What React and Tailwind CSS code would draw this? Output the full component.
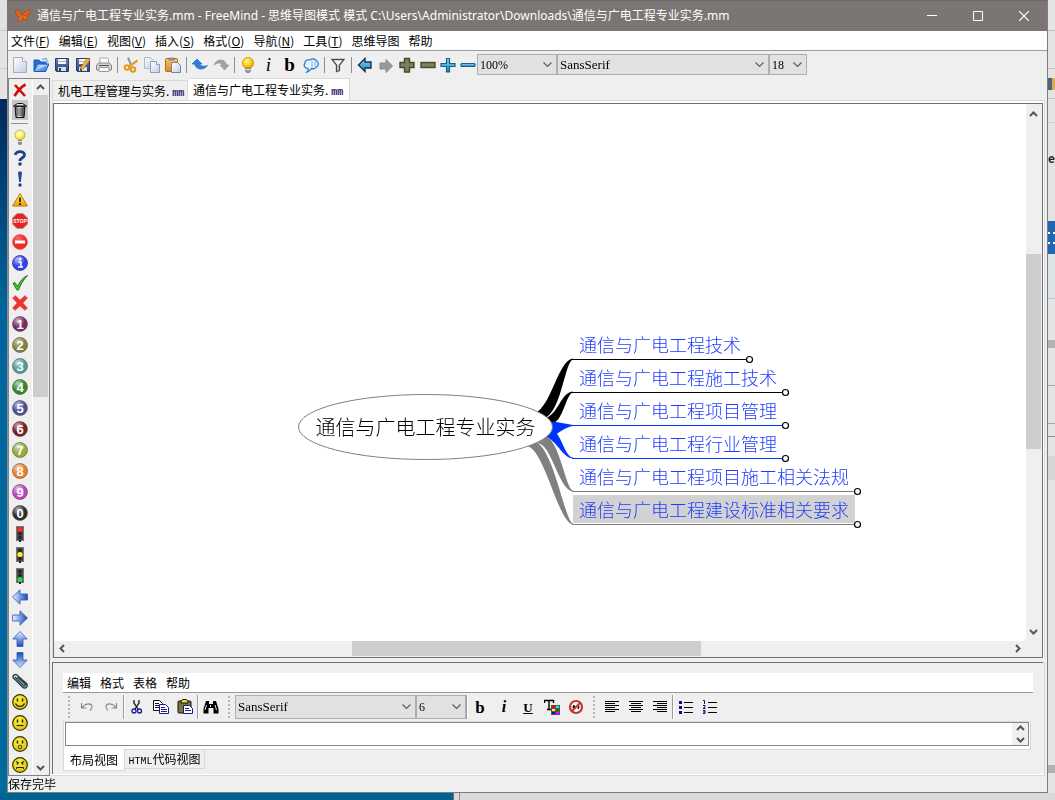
import React from "react";

const CJK = "font-['Noto_Sans_CJK_SC','Noto_Sans',sans-serif]";
const SERIF = "font-['Liberation_Serif','Noto_Sans_CJK_SC',serif]";

function Svg({ w = 16, h = 16, children, className = "" }) {
  return (
    <svg width={w} height={h} viewBox={`0 0 ${w} ${h}`} className={`shrink-0 ${className}`} aria-hidden="true">
      {children}
    </svg>
  );
}

/* ---------- shared gradients ---------- */
function Defs() {
  return (
    <svg width="0" height="0" className="absolute" aria-hidden="true">
      <defs>
        <linearGradient id="paper" x1="0" y1="0" x2="1" y2="1"><stop offset="0" stopColor="#fff" /><stop offset="1" stopColor="#c3cde0" /></linearGradient>
        <linearGradient id="folder" x1="0" y1="0" x2="1" y2="1"><stop offset="0" stopColor="#cfe6ff" /><stop offset="1" stopColor="#1f6fd8" /></linearGradient>
        <linearGradient id="disk" x1="0" y1="0" x2="0" y2="1"><stop offset="0" stopColor="#6d84b8" /><stop offset="1" stopColor="#2c3f70" /></linearGradient>
        <linearGradient id="clip" x1="0" y1="0" x2="0" y2="1"><stop offset="0" stopColor="#ffc45a" /><stop offset="1" stopColor="#e08a1c" /></linearGradient>
        <radialGradient id="bulb" cx="0.4" cy="0.35" r="0.7"><stop offset="0" stopColor="#fff7a0" /><stop offset="0.5" stopColor="#ffd21a" /><stop offset="1" stopColor="#ee8a00" /></radialGradient>
        <radialGradient id="idea" cx="0.4" cy="0.35" r="0.7"><stop offset="0" stopColor="#fffff0" /><stop offset="0.6" stopColor="#ffee58" /><stop offset="1" stopColor="#d9bf20" /></radialGradient>
        <linearGradient id="arrowA" x1="0" y1="0" x2="1" y2="0"><stop offset="0" stopColor="#eaf4ff" /><stop offset="1" stopColor="#1648b8" /></linearGradient>
        <linearGradient id="arrowB" x1="0" y1="0" x2="0" y2="1"><stop offset="0" stopColor="#eaf4ff" /><stop offset="1" stopColor="#1648b8" /></linearGradient>
        <linearGradient id="arrowC" x1="0" y1="0" x2="0" y2="1"><stop offset="0" stopColor="#1648b8" /><stop offset="1" stopColor="#d5e8ff" /></linearGradient>
        <linearGradient id="cyan" x1="0" y1="0" x2="0" y2="1"><stop offset="0" stopColor="#8fd4f2" /><stop offset="1" stopColor="#1b86b8" /></linearGradient>
        <linearGradient id="can" x1="0" y1="0" x2="1" y2="0"><stop offset="0" stopColor="#333" /><stop offset="0.4" stopColor="#f2f2f2" /><stop offset="1" stopColor="#222" /></linearGradient>
        <radialGradient id="shine" cx="0.35" cy="0.25" r="0.8"><stop offset="0" stopColor="#fff" stopOpacity="0.65" /><stop offset="0.6" stopColor="#fff" stopOpacity="0" /></radialGradient>
        <radialGradient id="smile" cx="0.4" cy="0.3" r="0.8"><stop offset="0" stopColor="#fff240" /><stop offset="1" stopColor="#d8bc00" /></radialGradient>
        <linearGradient id="warn" x1="0" y1="0" x2="0" y2="1"><stop offset="0" stopColor="#fff04a" /><stop offset="1" stopColor="#f5a000" /></linearGradient>
      </defs>
    </svg>
  );
}

/* ---------- main toolbar icons ---------- */
const NewIcon = () => <Svg><path d="M1.5.5h9l4 4v11h-13z" fill="url(#paper)" stroke="#a3adbf" /><path d="M10.500.5v4h4" fill="#fff" stroke="#a3adbf" /></Svg>;
const OpenIcon = () => (
  <Svg><path d="M1 14V3h5l2 2h5v9z" fill="#2f6fcc" stroke="#1b5ab4" /><path d="M9 2.500l4-1 2 4" fill="none" stroke="#7fb0ea" strokeWidth="1.500" /><path d="M1 14.500L4.500 7H16l-3.500 7.500z" fill="url(#folder)" stroke="#155ac0" /><path d="M3 13l5-5h6z" fill="#fff" opacity=".5" /></Svg>
);
const DiskBody = () => (
  <><path d="M1.500 1.500h13v13h-12l-1-1z" fill="url(#disk)" stroke="#2b3c66" /><path d="M4 2h8v5H4z" fill="#f4f6fa" /><path d="M4 4.500h8" stroke="#a8b4cc" /><path d="M4 10h8v4H4z" fill="#d8dfea" /><path d="M5 11h2v3H5z" fill="#2b3c66" /></>
);
const SaveIcon = () => <Svg><DiskBody /></Svg>;
const SaveAsIcon = () => <Svg><DiskBody /><path d="M5.500 13l1-3.500L12.500 1l2.500 2-6.500 8.500z" fill="#ffb52e" stroke="#b06a00" strokeWidth=".7" /></Svg>;
const PrintIcon = () => (
  <Svg><path d="M4 7V1h7l1.500 1v5z" fill="#fff" stroke="#aaa" /><path d="M.5 8l2.500-2h10l2.500 2v5H.5z" fill="#d2d2d0" stroke="#888" /><path d="M3 10.500h10v4H3z" fill="#f6f6f6" stroke="#999" /><path d="M3 8.500h10" stroke="#555" /></Svg>
);
const CutIcon = () => (
  <Svg><path d="M5 .5l3.500 8.500" stroke="#8f969e" strokeWidth="2" /><path d="M14.500 3.500L6 9.500" stroke="#e0a02a" strokeWidth="2.200" /><circle cx="4" cy="10.500" r="2.300" fill="none" stroke="#e29a1c" strokeWidth="2" /><circle cx="10" cy="12.500" r="2.300" fill="none" stroke="#e29a1c" strokeWidth="2" /></Svg>
);
const CopyIcon = () => (
  <Svg><path d="M.5.5h6l3 3v8h-9z" fill="url(#paper)" stroke="#b0b8d0" /><path d="M6.500 4.500h6l3 3v8h-9z" fill="url(#paper)" stroke="#8f9cc0" /><path d="M12.500 4.500v3h3" fill="#fff" stroke="#8f9cc0" /></Svg>
);
const PasteIcon = () => (
  <Svg><rect x=".5" y="1.500" width="12" height="13" rx="1" fill="url(#clip)" stroke="#b36a12" /><path d="M4 3V1h5v2z" fill="#8aa0c8" stroke="#5a6a90" strokeWidth=".6" /><path d="M6.500 5.500h6l3 3v7h-9z" fill="url(#paper)" stroke="#6d83b8" /></Svg>
);
const UndoIcon = () => <Svg><path d="M0 7l5-5 5 5H7.500c1 2 4 3 8 1.500-3 4.500-11 5.500-13-1.500z" fill="#2e7de0" stroke="#1c5bb4" strokeWidth=".6" /></Svg>;
const RedoIcon = () => <Svg><path d="M16 8l-4.500 5L7 8h2.500C8.500 5.500 5 5 1 8 3 2 12 .5 13.500 8z" fill="#a2a2a2" stroke="#8a8a8a" strokeWidth=".6" /></Svg>;
const BulbIcon = () => (
  <Svg><circle cx="8" cy="6" r="5.600" fill="url(#bulb)" stroke="#e08c00" strokeWidth=".8" /><path d="M5.500 11h5v3l-1.500 2H7l-1.500-2z" fill="#9a9a9a" stroke="#666" strokeWidth=".5" /><path d="M5.500 12.500h5" stroke="#e8e8e8" /></Svg>
);
const CloudIcon = () => (
  <Svg><path d="M5 11.500C1 11.500.5 8 2 6.500 1.500 3.500 5 2 7 3c2-2 6-1 6.500 1 2.500 1 2 5 0 6-1 1.500-3 2-5 1.500-1 2-2.500 3-4.500 3.500 1-1 1.500-2 1-3.500z" fill="#e3f3ff" stroke="#2f80cc" strokeWidth="1.300" /><path d="M9 4v6.500M12 4.500v5" stroke="#a9d3f5" strokeWidth="2" /></Svg>
);
const FilterIcon = () => <Svg><path d="M2 2.500h12L9.500 8v5.500l-3 1V8z" fill="#f4f4f4" stroke="#4c4c4c" strokeWidth="1.300" /><path d="M8 8v5" stroke="#9a9a9a" /></Svg>;
const BackIcon = () => <Svg><path d="M1.500 8L8 1.500v3.500h6v6H8v3.500z" fill="url(#cyan)" stroke="#12335c" strokeWidth="1.400" /></Svg>;
const ForwardIcon = () => <Svg><path d="M14.500 9L8 2.500V6H2v6h6v3.500z" fill="#999" stroke="#8a8a8a" /></Svg>;
const PlusIcon = ({ fill, stroke }) => <Svg><path d="M5.500 1.500h5v4h4.500v5h-4.500v4.500h-5v-4.500H1v-5h4.500z" fill={fill} stroke={stroke} strokeWidth="1.400" /></Svg>;
const ThinPlus = () => <Svg><path d="M6.500 1.500h3v5H15v3H9.500V15h-3V9.500H1v-3h5.500z" fill="url(#cyan)" stroke="#1a5f8c" strokeWidth="1.200" /></Svg>;
const MinusIcon = () => <Svg><rect x="1" y="5.500" width="14" height="5" fill="#7d7d68" stroke="#4a4a20" strokeWidth="1.400" /></Svg>;
const ThinMinus = () => <Svg><rect x="1" y="6.500" width="14" height="3" rx="1" fill="url(#cyan)" stroke="#1a5f8c" strokeWidth="1.200" /></Svg>;
const Letter = ({ children, className = "" }) => <span className={`${SERIF} leading-none text-black ${className}`}>{children}</span>;

/* ---------- icon palette ---------- */
const Ball = ({ color, label }) => (
  <Svg>
    <circle cx="8" cy="8" r="7.500" fill={color} stroke="#555" strokeOpacity=".6" />
    <circle cx="8" cy="8" r="7" fill="url(#shine)" />
    <text x="8" y="12.500" textAnchor="middle" fontFamily="Liberation Sans, sans-serif" fontWeight="bold" fontSize="13" fill="#fff">{label}</text>
  </Svg>
);
const Light = ({ on }) => (
  <Svg>
    <rect x="4.500" y=".5" width="7" height="14" fill="#4a4a4a" stroke="#777" />
    <path d="M8 14v2" stroke="#222" strokeWidth="2" />
    <circle cx="8" cy="3.500" r={on === 0 ? 2.6 : 1.8} fill={on === 0 ? "#ff2a1a" : "#222"} />
    <circle cx="8" cy="7.500" r={on === 1 ? 2.6 : 1.8} fill={on === 1 ? "#ffee22" : "#222"} />
    <circle cx="8" cy="11.500" r={on === 2 ? 2.6 : 1.8} fill={on === 2 ? "#22e044" : "#222"} />
  </Svg>
);
const Face = ({ children }) => (
  <Svg><circle cx="8" cy="8" r="7.300" fill="url(#smile)" stroke="#3a3400" strokeWidth="1.200" />{children}</Svg>
);
const Eyes = () => <path d="M5.500 4.500v3M10.500 4.500v3" stroke="#222" strokeWidth="1.500" />;

const ICONS = [
  ["创意", <Svg><circle cx="8" cy="6" r="5" fill="url(#idea)" stroke="#b8a83a" strokeWidth=".8" /><path d="M6 11h4v3.500l-1 1.500H7l-1-1.500z" fill="#8d8d8d" /><path d="M6 12.500h4" stroke="#ddd" /></Svg>],
  ["问题", <Svg><path d="M3.500 5C3.500.5 12.500.5 12.500 5c0 3-4.500 2.500-4.500 6" fill="none" stroke="#1e3f86" strokeWidth="2.800" /><circle cx="8" cy="14" r="1.800" fill="#1e3f86" /></Svg>],
  ["重要", <Svg><path d="M6 1.500C6 0 10 0 10 1.500L8.800 11H7.200z" fill="#1e4a96" /><circle cx="8" cy="14" r="1.700" fill="#1e3f86" /></Svg>],
  ["警告", <Svg><path d="M8 1.500L15.500 14H.5z" fill="url(#warn)" stroke="#b87a10" strokeLinejoin="round" /><path d="M8 5.500v4.500M8 11v2" stroke="#111" strokeWidth="1.600" /></Svg>],
  ["停止", <Svg><path d="M5 .5h6L15.500 5v6L11 15.500H5L.5 11V5z" fill="#e32424" stroke="#c98a8a" /><text x="8" y="10" textAnchor="middle" fontFamily="Liberation Sans, sans-serif" fontWeight="bold" fontSize="5" fill="#fff">STOP</text></Svg>],
  ["禁止", <Svg><circle cx="8" cy="8" r="7.500" fill="#ee2b24" stroke="#d66" strokeWidth=".7" /><circle cx="8" cy="8" r="7" fill="url(#shine)" opacity=".5" /><rect x="3" y="6.500" width="10" height="3" fill="#fff" /></Svg>],
  ["信息", <Svg><circle cx="8" cy="8" r="7.500" fill="#3542e8" stroke="#2028a0" strokeWidth=".7" /><circle cx="8" cy="8" r="7" fill="url(#shine)" /><path d="M6.500 7H9v4.500M6 12h5" stroke="#fff" strokeWidth="1.500" fill="none" /><circle cx="8.300" cy="4" r="1.300" fill="#fff" /></Svg>],
  ["完成", <Svg><path d="M1 8.500l2-1 2.500 4C8 6 11 2.500 15.500.5 11 5 8.500 10 6.500 15H5z" fill="#3fc63a" stroke="#146c14" strokeWidth=".9" /></Svg>, "h-5"],
  ["取消", <Svg><path d="M.5 3L3.500.5 8 5l5-4.500 2.500 2.500L11 8l4.500 5-2.500 2.500L8 11l-5 4.500L.5 13 5 8z" fill="#f03030" stroke="#e07070" strokeWidth=".7" /></Svg>, "h-5"],
  ["优先级 1", <Ball color="#7a2a68" label="1" />],
  ["优先级 2", <Ball color="#85803a" label="2" />],
  ["优先级 3", <Ball color="#4f9c9c" label="3" />],
  ["优先级 4", <Ball color="#2f8a2a" label="4" />],
  ["优先级 5", <Ball color="#4a4f9c" label="5" />],
  ["优先级 6", <Ball color="#7a1c22" label="6" />],
  ["优先级 7", <Ball color="#93ad3a" label="7" />],
  ["优先级 8", <Ball color="#ef7d22" label="8" />],
  ["优先级 9", <Ball color="#c23cc6" label="9" />],
  ["优先级 0", <Ball color="#2c2c2c" label="0" />],
  ["红灯", <Light on={0} />],
  ["黄灯", <Light on={1} />],
  ["绿灯", <Light on={2} />],
  ["左", <Svg><path d="M.5 8L8 .8V5h7.500v6H8v4.200z" fill="url(#arrowA)" stroke="#2a5cb8" strokeWidth=".8" /></Svg>],
  ["右", <Svg><path d="M15.500 8L8 .8V5H.5v6H8v4.200z" fill="url(#arrowA)" stroke="#2a5cb8" strokeWidth=".8" /></Svg>],
  ["上", <Svg><path d="M8 .5L15.200 8H11v7.500H5V8H.8z" fill="url(#arrowB)" stroke="#2a5cb8" strokeWidth=".8" /></Svg>],
  ["下", <Svg><path d="M8 15.500L15.200 8H11V.5H5V8H.8z" fill="url(#arrowC)" stroke="#2a5cb8" strokeWidth=".8" /></Svg>],
  ["附件", <Svg><path d="M14 11L5 2C3 .5 0 3 1.500 5l9 9c2.500 2.500 6-.5 4-3.500L7 4M3 4l8.500 8.500c1 1 2.500-.5 1.500-1.500L5.500 4" fill="none" stroke="#27464c" strokeWidth="1.500" /></Svg>],
  ["高兴", <Face><Eyes /><path d="M3.500 9.500c2 4 7 4 9 0" fill="none" stroke="#222" strokeWidth="1.100" /></Face>],
  ["中性", <Face><Eyes /><path d="M4.500 10.500h7" stroke="#222" strokeWidth="1.100" /></Face>],
  ["惊讶", <Face><Eyes /><circle cx="8" cy="11" r="1.800" fill="none" stroke="#333" /></Face>],
  ["生气", <Face><path d="M4 4.500l3 1.500M12 4.500L9 6" stroke="#222" strokeWidth="1.200" /><path d="M5.500 6v1.500M10.500 6v1.500" stroke="#222" strokeWidth="1.500" /><path d="M4.500 12v-1.500h7V12" fill="none" stroke="#222" /></Face>],
];

/* ---------- small controls ---------- */
function ToolButton({ label, children, className = "w-[21px]" }) {
  return (
    <button type="button" aria-label={label} className={`flex h-6 shrink-0 items-center justify-center ${className}`}>
      {children}
    </button>
  );
}

function Separator() {
  return (
    <span className="flex h-4 w-[6px] shrink-0 justify-center">
      <span className="w-px bg-[#8e8e8e]" />
    </span>
  );
}

function Grip() {
  return (
    <span className="flex h-6 w-3 shrink-0 items-center justify-center">
      <span className="h-[22px] border-l-2 border-dotted border-[#b4b4b4]" />
    </span>
  );
}

function Rule() {
  return <span className="h-6 w-[2px] shrink-0 border-l border-[#9c9c9c] bg-white" />;
}

function Combo({ label, value, className, text = "text-[13px]" }) {
  return (
    <span className={`relative flex shrink-0 ${className}`}>
      <select aria-label={label} defaultValue={value} className={`h-full w-full appearance-none rounded-none border border-[#adadb2] bg-[#e1e1e1] pl-[2px] text-black ${SERIF} ${text}`}>
        <option>{value}</option>
      </select>
      <svg width="9" height="6" viewBox="0 0 9 6" className="pointer-events-none absolute right-[5px] top-1/2 -translate-y-1/2" aria-hidden="true">
        <path d="M.5.5l4 4 4-4" fill="none" stroke="#5c5c5c" strokeWidth="1.200" />
      </svg>
    </span>
  );
}

const ARROWS = { up: "M1 6l3.500-3.500L8 6", down: "M1 3l3.500 3.500L8 3", left: "M6 1L2.500 4.500 6 8", right: "M3 1l3.500 3.500L3 8" };
function Arrow({ dir, className }) {
  return (
    <button type="button" aria-label={`scroll ${dir}`} className={`flex shrink-0 items-center justify-center ${className}`}>
      <Svg w={9} h={9}><path d={ARROWS[dir]} fill="none" stroke="#555" strokeWidth="2" /></Svg>
    </button>
  );
}

/* ---------- title bar and menus ---------- */
function TitleBar() {
  return (
    <header className="flex h-[31px] shrink-0 items-center border-t border-[#6c6665] bg-[#7b7574] pl-2 text-white">
      <Svg w={16} h={14} className="mr-[6px]">
        <path d="M7.500 6C6 2 2.500.5.5 1.500c0 3 1.500 5.500 4 6-1.500 1-2 3.500-.5 5 2 .5 3.500-2 4-4 .8 1.500 2.500 3 4 2.500.8-1.500.5-3-.5-4 2.500-.5 4-3 4-5.500C13 .5 9 3 7.500 6z" fill="#ef6a1c" stroke="#9a3a0c" strokeWidth=".6" />
        <path d="M2.500 3l4.500 3.500M14 3.500L8.500 7" stroke="#8a3410" strokeWidth=".6" />
      </Svg>
      <h1 className="min-w-0 flex-1 truncate font-['Noto_Sans','Noto_Sans_CJK_SC',sans-serif] text-[12px] font-normal">
        通信与广电工程专业实务.mm - FreeMind - 思维导图模式 模式 C:\Users\Administrator\Downloads\通信与广电工程专业实务.mm
      </h1>
      <div className="flex shrink-0">
        <button type="button" aria-label="最小化" className="flex w-[46px] justify-center"><Svg w={10} h={10}><path d="M0 4.500h10" stroke="#fff" /></Svg></button>
        <button type="button" aria-label="最大化" className="flex w-[46px] justify-center"><Svg w={10} h={10}><path d="M.5.500h9v9h-9z" fill="none" stroke="#fff" /></Svg></button>
        <button type="button" aria-label="关闭" className="flex w-[46px] justify-center"><Svg w={10} h={10}><path d="M0 0l10 10M10 0L0 10" stroke="#fff" strokeWidth="1.200" /></Svg></button>
      </div>
    </header>
  );
}

const MENUS = [["文件", "F"], ["编辑", "E"], ["视图", "V"], ["插入", "S"], ["格式", "O"], ["导航", "N"], ["工具", "T"], ["思维导图"], ["帮助"]];
function MenuBar() {
  return (
    <nav className="flex h-5 shrink-0 items-center gap-[9px] border-b border-[#9a9a9a] bg-white pl-[3px] text-[12px] leading-4">
      {MENUS.map(([name, key]) => (
        <button key={name} type="button" className="whitespace-nowrap">
          {name}{key && <>(<u>{key}</u>)</>}
        </button>
      ))}
    </nav>
  );
}

function MainToolbar() {
  return (
    <div className="flex h-[27px] shrink-0 items-center pl-px">
      <ToolButton label="新建"><NewIcon /></ToolButton>
      <ToolButton label="打开"><OpenIcon /></ToolButton>
      <ToolButton label="保存"><SaveIcon /></ToolButton>
      <ToolButton label="另存为"><SaveAsIcon /></ToolButton>
      <ToolButton label="打印"><PrintIcon /></ToolButton>
      <Separator />
      <ToolButton label="剪切"><CutIcon /></ToolButton>
      <ToolButton label="复制"><CopyIcon /></ToolButton>
      <ToolButton label="粘贴"><PasteIcon /></ToolButton>
      <Separator />
      <ToolButton label="撤销"><UndoIcon /></ToolButton>
      <ToolButton label="重做"><RedoIcon /></ToolButton>
      <Separator />
      <ToolButton label="图标"><BulbIcon /></ToolButton>
      <ToolButton label="斜体"><Letter className="text-[19px] italic">i</Letter></ToolButton>
      <ToolButton label="粗体"><Letter className="text-[19px] font-bold">b</Letter></ToolButton>
      <ToolButton label="云"><CloudIcon /></ToolButton>
      <Separator />
      <ToolButton label="过滤"><FilterIcon /></ToolButton>
      <Separator />
      <ToolButton label="后退"><BackIcon /></ToolButton>
      <ToolButton label="前进"><ForwardIcon /></ToolButton>
      <ToolButton label="展开"><PlusIcon fill="#7d7d68" stroke="#4a4a20" /></ToolButton>
      <ToolButton label="折叠"><MinusIcon /></ToolButton>
      <ToolButton label="放大" className="w-5"><ThinPlus /></ToolButton>
      <ToolButton label="缩小" className="w-[19px]"><ThinMinus /></ToolButton>
      <Combo label="缩放" value="100%" className="h-[21px] w-20" text="text-[12px]" />
      <Combo label="字体" value="SansSerif" className="h-[21px] w-[212px]" />
      <Combo label="字号" value="18" className="h-[21px] w-[38px]" text="text-[12px]" />
    </div>
  );
}

function IconPalette() {
  return (
    <aside className="flex w-[42px] shrink-0 border border-[#82828a]">
      <div className="flex min-w-0 flex-1 flex-col items-center overflow-hidden border-r border-white pr-[2px]">
        <button type="button" aria-label="删除图标" className="flex h-[21px] w-[21px] shrink-0 items-center justify-center"><Svg><path d="M3 3l10 11M13.500 2.500C9 5 5 10 2.500 14" stroke="#d40a0a" strokeWidth="2.600" /></Svg></button>
        <button type="button" aria-label="删除全部图标" className="flex h-5 w-4 shrink-0 items-center justify-center bg-[#c6c6c6]">
          <Svg><path d="M3 4.500h10L12 15.500H4z" fill="url(#can)" stroke="#111" /><path d="M1.500 4l4-2.500h5L14.500 4z" fill="#ddd" stroke="#111" /><path d="M6 6v8M8 6v8M10 6v8" stroke="#333" strokeWidth=".8" /></Svg>
        </button>
        <hr className="my-[2px] mt-[3px] w-[17px] shrink-0 border-[#909090]" />
        {ICONS.map(([name, icon, height = "h-[21px]"]) => (
          <button key={name} type="button" aria-label={name} className={`flex w-[21px] shrink-0 items-center justify-center ${height}`}>{icon}</button>
        ))}
      </div>
      <div className="mr-px flex w-[15px] shrink-0 flex-col">
        <Arrow dir="up" className="h-4" />
        <div className="flex-[302] bg-[#cdcdcd]" />
        <div className="flex-[363]" />
        <Arrow dir="down" className="h-4" />
      </div>
    </aside>
  );
}

/* ---------- mind map ---------- */
const BRANCHES = [
  { text: "通信与广电工程技术", y: 29, end: 448, color: "#000", d: "M236 84C254 76 260 30 275 28.500v1C267 32 264 76 249 87z" },
  { text: "通信与广电工程施工技术", y: 62, end: 484, color: "#000", d: "M247 89C262 82 262 63 275 61.500v1C268 64 266 88 256 93z" },
  { text: "通信与广电工程项目管理", y: 95, end: 484, color: "#0033ff", d: "M252 91.500C260 92 268 94 275 95v1C268 97 262 102 254 107z" },
  { text: "通信与广电工程行业管理", y: 128, end: 484, color: "#0033ff", d: "M245 106L256 101C264 106 267 127 275 127.500v1C264 128 258 108 245 106z" },
  { text: "通信与广电工程项目施工相关法规", y: 161, end: 556, color: "#808080", d: "M238 113C254 112 260 160 275 161.500v-1C268 160 262 112 248 106z" },
  { text: "通信与广电工程建设标准相关要求", y: 194, end: 556, color: "#808080", d: "M228 116C246 116 260 193 275 194.500v-1C267 192 256 120 238 112z", selected: true },
];

function MindMap() {
  return (
    <div className="relative min-w-0 flex-1 overflow-hidden rounded-br bg-white">
      <div className="absolute left-[244px] top-[226px] h-[200px] w-[564px]">
        <svg width="564" height="200" viewBox="0 0 564 200" className="absolute inset-0" aria-hidden="true">
          {BRANCHES.map((b) => <path key={b.text} d={b.d} fill={b.color} />)}
          <ellipse cx="127.500" cy="97" rx="127" ry="32.500" fill="#fff" stroke="#808080" />
        </svg>
        <p className="absolute left-0 top-16 flex h-[66px] w-[255px] items-center justify-center whitespace-nowrap text-[20px] font-light text-black">通信与广电工程专业实务</p>
        <ul className="absolute left-[275px] top-0 flex flex-col items-start gap-[5px]">
          {BRANCHES.map((b) => (
            <li key={b.text} className={`flex h-7 items-center whitespace-nowrap px-[6px] text-[18px] font-light text-[#1f3cff] ${b.selected ? "bg-[#d2d2d2]" : ""}`}>{b.text}</li>
          ))}
        </ul>
        <svg width="564" height="200" viewBox="0 0 564 200" className="pointer-events-none absolute inset-0" aria-hidden="true">
          {BRANCHES.map((b) => (
            <g key={b.text}>
              <path d={`M274 ${b.y + 0.5}H${b.end}`} stroke={b.color} />
              <circle cx={b.end + 3.5} cy={b.y + 0.5} r="3" fill="#fff" stroke="#000" strokeWidth="1.200" />
            </g>
          ))}
        </svg>
      </div>
    </div>
  );
}

function MapPane() {
  return (
    <div className="flex min-h-0 flex-1 flex-col border-x border-t border-[#d9d9d9] bg-white pr-px pt-[2px]">
      <div className="flex min-h-0 flex-1 flex-col border border-[#6e7078] bg-[#efefef]">
        <div className="flex min-h-0 flex-1">
          <MindMap />
          <div className="flex w-4 shrink-0 flex-col pr-px">
            <Arrow dir="up" className="h-5" />
            <div className="flex-[130]" />
            <div className="flex-[196] bg-[#cdcdcd]" />
            <div className="flex-[172]" />
            <Arrow dir="down" className="h-5" />
          </div>
        </div>
        <div className="flex h-4 shrink-0 pb-px pr-4">
          <Arrow dir="left" className="w-4" />
          <div className="flex-[282]" />
          <div className="flex-[350] bg-[#cdcdcd]" />
          <div className="flex-[307]" />
          <Arrow dir="right" className="w-[18px]" />
        </div>
      </div>
    </div>
  );
}

/* ---------- note editor ---------- */
const lines = (xs) => xs.map(([x1, x2], i) => <path key={i} d={`M${x1} ${i * 2 + 2.5}H${x2}`} stroke="#000" />);
const AlignLeft = () => <Svg>{lines([[1, 15], [1, 11], [1, 15], [1, 11], [1, 15], [1, 11]])}</Svg>;
const AlignCenter = () => <Svg>{lines([[1, 15], [3, 13], [1, 15], [3, 13], [1, 15], [3, 13]])}</Svg>;
const AlignRight = () => <Svg>{lines([[1, 15], [5, 15], [1, 15], [5, 15], [1, 15], [5, 15]])}</Svg>;

function NoteToolbar() {
  const w = "w-6";
  return (
    <div className="flex h-7 shrink-0 items-center">
      <Grip />
      <ToolButton label="撤销编辑" className={w}><Svg><path d="M2.500 4v5h5M3 8.500C6 4 12 4 13 7c.5 2-.5 3-2 4.500" fill="none" stroke="#858585" strokeWidth="1.100" /></Svg></ToolButton>
      <ToolButton label="重做编辑" className={w}><Svg><path d="M13.500 4v5h-5M13 8.500C10 4 4 4 3 7c-.5 2 .5 3 2 4.500" fill="none" stroke="#858585" strokeWidth="1.100" /></Svg></ToolButton>
      <Rule />
      <ToolButton label="剪切文字" className={w}><Svg><path d="M5 1v3l4 6M10 1v3L6 10" fill="none" stroke="#111" strokeWidth="1.300" /><circle cx="5" cy="12" r="2" fill="none" stroke="#1a1a9a" strokeWidth="1.300" /><circle cx="10.500" cy="12" r="2" fill="none" stroke="#1a1a9a" strokeWidth="1.300" /></Svg></ToolButton>
      <ToolButton label="复制文字" className={w}><Svg><path d="M.5 1.500h6l3 3v7h-9z" fill="#fff" stroke="#111" /><path d="M2 4.500h4M2 6.500h5M2 8.500h5" stroke="#111" /><path d="M6.500 5.500h6l3 3v6h-9z" fill="#fff" stroke="#1a1a8a" /><path d="M8 8.500h4M8 10.500h6M8 12.500h6" stroke="#1a1a8a" /></Svg></ToolButton>
      <ToolButton label="粘贴文字" className={w}><Svg><rect x="1" y="2" width="13" height="12" rx="1" fill="#77753a" stroke="#111" /><path d="M4 4V2l2-1.500h3L11 2v2z" fill="#e8e23a" stroke="#111" /><path d="M6.500 6.500h6l3 3v5h-9z" fill="#fff" stroke="#1a1a8a" /><path d="M8 9.500h4M8 11.500h6" stroke="#1a1a8a" /></Svg></ToolButton>
      <Rule />
      <ToolButton label="查找" className={w}><Svg><path d="M3 2h3v3h4V2h3l2.500 8v4.500h-5V9h-5v5.500H.5V10z" fill="#000" /><path d="M3.500 6L2 11M12 6l1.500 5M7.500 6v2" stroke="#fff" strokeWidth=".9" /></Svg></ToolButton>
      <Grip />
      <Combo label="正文字体" value="SansSerif" className="h-6 w-[181px]" />
      <Combo label="正文字号" value="6" className="h-6 w-[50px]" text="text-[12px]" />
      <Rule />
      <ToolButton label="正文粗体" className={w}><Letter className="text-[17px] font-bold">b</Letter></ToolButton>
      <ToolButton label="正文斜体" className={w}><Letter className="text-[16px] font-bold italic">i</Letter></ToolButton>
      <ToolButton label="下划线" className={w}><Letter className="text-[13px] font-bold underline">U</Letter></ToolButton>
      <ToolButton label="文字颜色" className={w}>
        <Svg><path d="M.5 4V1.500h9V4M5 1v9M3 10.500h4" fill="none" stroke="#000" strokeWidth="1.400" /><rect x="7" y="6" width="9" height="10" fill="#555" /><path d="M8 7h3v2H8z" fill="#f00" /><path d="M12 7h3v2h-3z" fill="#0ff" /><path d="M8 10h3v2H8z" fill="#ff0" /><path d="M12 10h3v2h-3z" fill="#080" /><path d="M8 13h3v2H8z" fill="#00f" /><path d="M12 13h3v2h-3z" fill="#f0f" /></Svg>
      </ToolButton>
      <ToolButton label="清除格式" className={w}><Svg><circle cx="8" cy="8" r="6" fill="#fff" stroke="#c43434" strokeWidth="2.200" /><path d="M5 9l1-3M10 10l1-3M7 7l-1 3" stroke="#111" strokeWidth="1.500" /><path d="M4 12l8-8" stroke="#c43434" strokeWidth="2" /></Svg></ToolButton>
      <Grip />
      <ToolButton label="左对齐" className={w}><AlignLeft /></ToolButton>
      <ToolButton label="居中" className={w}><AlignCenter /></ToolButton>
      <ToolButton label="右对齐" className={w}><AlignRight /></ToolButton>
      <Rule />
      <ToolButton label="项目符号" className={w}><Svg><path d="M1 2h3v3H1zM1 7h3v3H1zM1 12h3v3H1z" fill="#10107a" /><path d="M6 3.500h9M6 8.500h9M6 13.500h9" stroke="#000" /></Svg></ToolButton>
      <ToolButton label="编号" className={w}><Svg><path d="M1 1.500h1.500V5M1 6.500h2v1.500L1 9.500h2.500M1 11.500h2v3H1M1 13h2" fill="none" stroke="#10107a" /><path d="M6 3.500h9M6 8.500h9M6 13.500h9" stroke="#000" /></Svg></ToolButton>
    </div>
  );
}

function NotePanel() {
  return (
    <section className="mt-[4px] flex h-[114px] shrink-0 flex-col border-r border-[#d9d9d9]">
      <div className="mr-px flex flex-1 flex-col border-l border-t border-[#6e6e6e] pl-[10px] pr-[10px] pt-[10px]">
        <nav className="flex h-5 shrink-0 items-center gap-[9px] border-b border-[#9a9a9a] bg-white pl-1 text-[12px] leading-4">
          {["编辑", "格式", "表格", "帮助"].map((m) => <button key={m} type="button">{m}</button>)}
        </nav>
        <NoteToolbar />
        <div className="mr-[2px] border border-b-0 border-[#d9d9d9] bg-white pb-[3px] pl-px pr-px">
          <div className="flex h-6 border border-[#828790]">
            <textarea aria-label="备注" rows={1} className="block min-w-0 flex-1 resize-none bg-white outline-none" />
            <div className="flex w-4 shrink-0 flex-col bg-[#efefef]">
              <Arrow dir="up" className="h-[11px]" />
              <Arrow dir="down" className="h-[11px]" />
            </div>
          </div>
        </div>
        <div className="mr-[2px] flex items-start text-[12px]" role="tablist">
          <button type="button" role="tab" aria-selected="true" className="h-[22px] w-[62px] border border-t-0 border-[#d9d9d9] bg-white leading-[22px]">布局视图</button>
          <button type="button" role="tab" aria-selected="false" className={`h-5 w-20 border border-l-0 border-[#d9d9d9] leading-[18px] ${CJK}`}><span className="font-['Liberation_Mono',monospace] text-[10px]">HTML</span>代码视图</button>
          <span className="flex-1 border-t border-[#d9d9d9]" />
        </div>
      </div>
      <div className="h-[2px] border-b border-[#d9d9d9] bg-white" />
    </section>
  );
}

const Ext = () => <>.<span className="ml-[3px] font-['Liberation_Mono',monospace] text-[10px] font-bold text-[#2b1670]">mm</span></>;

function Workspace() {
  return (
    <main className="mr-[2px] flex min-w-0 flex-1 flex-col pl-[2px]">
      <div className="flex h-[22px] shrink-0 items-end text-[12px]" role="tablist">
        <button type="button" role="tab" aria-selected="false" className="h-5 w-[136px] shrink-0 whitespace-nowrap border border-b-0 border-[#d9d9d9] pl-[5px] text-left leading-5">机电工程管理与实务<Ext /></button>
        <button type="button" role="tab" aria-selected="true" className="h-[22px] w-[162px] shrink-0 whitespace-nowrap border-r border-t border-[#d9d9d9] bg-white pl-[5px] text-left leading-[21px]">通信与广电工程专业实务<Ext /></button>
      </div>
      <MapPane />
      <NotePanel />
    </main>
  );
}

/* ---------- desktop behind the window ---------- */
function RightEdge() {
  return (
    <div className="flex w-[7px] shrink-0 flex-col overflow-hidden bg-[#e4e4e4] text-[12px] leading-[30px] text-[#33506e]">
      <div className="h-[31px] shrink-0 border-b border-[#bdbdbd]" />
      <div className="h-[38px] shrink-0 border-b border-[#c4c4c4]" />
      <div className="flex h-[30px] shrink-0 items-center border-b border-[#c4c4c4]"><span className="h-3 w-1 border-2 border-[#4a6482]" /><span className="h-3 w-[3px] bg-[#e0a850]" /></div>
      <div className="h-[24px] shrink-0 border-b border-[#cfcfcf]" />
      <div className="h-[98px] shrink-0 pt-5 font-bold text-[#222]">e</div>
      <div className="flex h-[33px] shrink-0 items-center bg-[#2166b4]"><span className="h-3 w-[7px] border-y-2 border-dotted border-white" /></div>
      <div className="h-[45px] shrink-0 border-b border-[#c0c8ce] bg-[#dde2e6]" />
      <div className="h-[41px] shrink-0" />
      <div className="h-2 shrink-0 bg-[#b2b2b2]" />
      <div className="h-[38px] shrink-0 border-b border-[#a8a8a8]" />
      <div className="h-[38px] shrink-0 border-b border-[#a8a8a8]" />
      <div className="h-[13px] shrink-0 border-b border-[#8c8c8c]" />
      <div className="h-[43px] shrink-0 border-b-[24px] border-[#d6d6d6]" />
      <div className="flex-1" />
      <div className="h-2 shrink-0 bg-[#b2b2b2]" />
      <div className="h-5 shrink-0" />
    </div>
  );
}

export default function App() {
  return (
    <div className={`flex h-screen flex-col overflow-hidden text-black ${CJK}`}>
      <Defs />
      <div className="flex min-h-0 flex-1">
        <div className="flex w-[7px] shrink-0 flex-col">
          <div className="h-[31px] border-b border-[#c8c8c8] bg-[#e2e2e2]" />
          <div className="h-[38px] border-b border-[#c8c8c8] bg-[#e4e4e4]" />
          <div className="h-[30px] bg-[#e4e4e4]" />
          <div className="flex-1 bg-linear-to-b from-[#002a5c] via-[#00659c] via-30% to-[#006a9c]" />
        </div>
        <div className="flex min-w-0 flex-1 flex-col border-b border-r border-[#7d7d7d] bg-[#efefef]">
          <TitleBar />
          <div className="flex min-h-0 flex-1 flex-col border-l border-[#8a8a8a]">
            <MenuBar />
            <MainToolbar />
            <div className="flex min-h-0 flex-1">
              <IconPalette />
              <Workspace />
            </div>
            <footer className="h-4 shrink-0 text-[12px] leading-4">保存完毕</footer>
          </div>
        </div>
        <RightEdge />
      </div>
      <div className="flex h-[7px] shrink-0 bg-[#d9d9d9]">
        <div className="w-[43%] border-r border-[#6f6f6f] bg-[#00628f]" />
        <div className="w-[6px] border-r border-[#8c8c8c]" />
      </div>
    </div>
  );
}
